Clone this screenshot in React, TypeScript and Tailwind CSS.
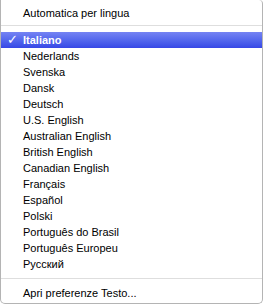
const languages = [
  'Nederlands',
  'Svenska',
  'Dansk',
  'Deutsch',
  'U.S. English',
  'Australian English',
  'British English',
  'Canadian English',
  'Français',
  'Español',
  'Polski',
  'Português do Brasil',
  'Português Europeu',
  'Русский',
];

export default function App() {
  return (
    <div className="w-[265px] h-[306px] bg-white" style={{ fontFamily: '"Liberation Sans", Arial, sans-serif' }}>
      <div className="w-[263px] h-[304px] bg-white border-x border-b border-[#b4b4b4] rounded-b-[5px] rounded-tr-[4px] pt-[5px] text-[11px] text-black">
        <div className="h-4 leading-4 pl-[22px]">Automatica per lingua</div>
        <div className="h-[11px] pt-[4px]">
          <div className="h-px bg-[#dedede]" />
        </div>
        <div className="h-4 leading-4 flex bg-gradient-to-b from-[#7583f3] to-[#3747e6] text-white font-bold">
          <span className="w-[22px] pl-[6px] text-[13px] font-normal" style={{ fontFamily: '"DejaVu Sans", sans-serif' }}>✓</span>
          <span>Italiano</span>
        </div>
        {languages.map((lang) => (
          <div key={lang} className="h-4 leading-4 pl-[22px]">
            {lang}
          </div>
        ))}
        <div className="h-[13px] pt-[6px]">
          <div className="h-px bg-[#dedede]" />
        </div>
        <div className="h-4 leading-4 pl-[22px]">Apri preferenze Testo...</div>
      </div>
    </div>
  );
}
